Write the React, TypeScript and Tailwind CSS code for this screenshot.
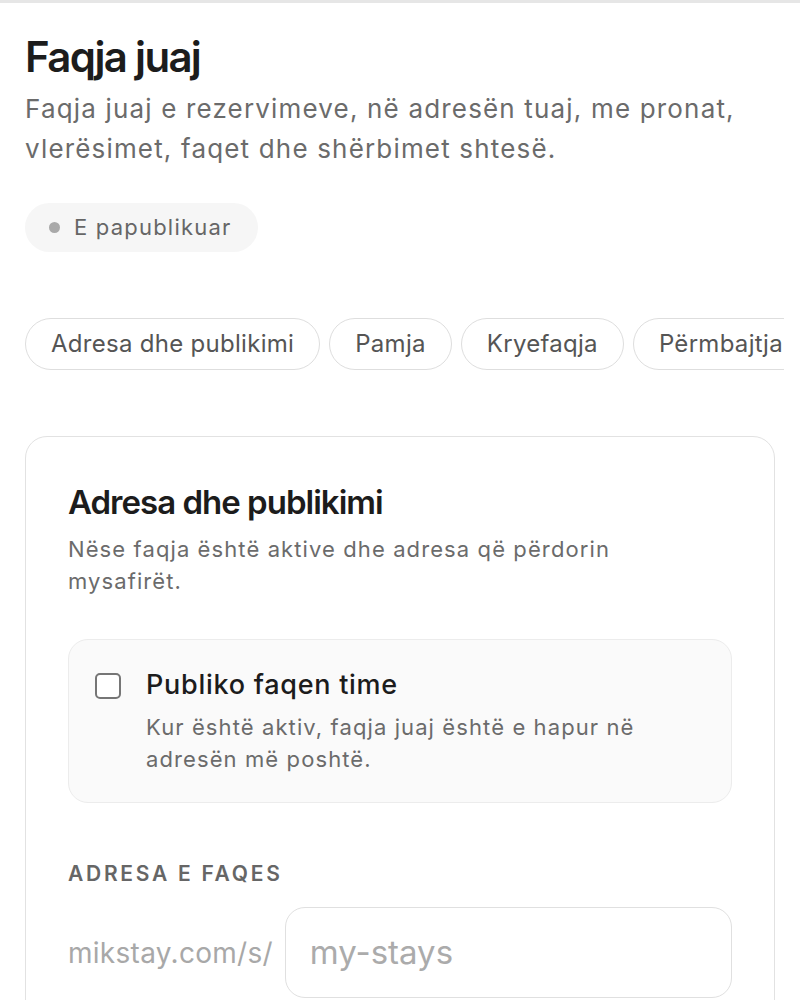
import React from "react";

const tabs = ["Adresa dhe publikimi", "Pamja", "Kryefaqja", "Përmbajtja"];

const App = () => {
  return (
    <div
      className="w-[800px] h-[1000px] overflow-hidden bg-white border-t-[3px] border-[#e6e6e6]"
      style={{ fontFamily: "Inter, 'Noto Sans', sans-serif" }}
    >
      <div className="px-[25px] pt-[29px]">
        <h1 className="text-[42px] leading-[50px] font-semibold tracking-[-0.04em] text-[#1c1c1c]">Faqja juaj</h1>
        <p className="mt-[7px] text-[26px] leading-[40px] tracking-[0.045em] text-[#6b6b6b]">
          Faqja juaj e rezervimeve, në adresën tuaj, me pronat, vlerësimet, faqet dhe shërbimet shtesë.
        </p>

        <div className="mt-[34px] inline-flex items-center h-[49px] pl-[24px] pr-[26px] rounded-full bg-[#f6f6f6]">
          <span className="w-[11px] h-[11px] rounded-full bg-[#a9a9a9]" />
          <span className="ml-[14px] text-[22px] tracking-[0.055em] text-[#666666]">E papublikuar</span>
        </div>

        <div className="mt-[66px] mr-[-9px] flex gap-[9px] overflow-hidden">
          {tabs.map((t) => (
            <button
              key={t}
              className="shrink-0 h-[52px] px-[25px] rounded-full border-[1.5px] border-[#dedede] text-[24px] tracking-[0.012em] text-[#555555] whitespace-nowrap"
            >
              {t}
            </button>
          ))}
        </div>

        <div className="mt-[66px] rounded-[22px] border-[1.5px] border-[#e2e2e2] px-[42px] pt-[47px] pb-[40px]">
          <h2 className="text-[33px] leading-[36px] font-semibold tracking-[-0.03em] text-[#1c1c1c]">
            Adresa dhe publikimi
          </h2>
          <p className="mt-[13px] text-[22px] leading-[32px] tracking-[0.05em] text-[#6b6b6b] max-w-[580px]">
            Nëse faqja është aktive dhe adresa që përdorin mysafirët.
          </p>

          <div className="mt-[42px] rounded-[20px] border border-[#ececec] bg-[#fafafa] pl-[26px] pr-[24px] pt-[29px] pb-[27px] flex gap-[25px]">
            <span className="mt-[4px] shrink-0 w-[26px] h-[26px] rounded-[5px] border-2 border-[#767676] bg-white" />
            <div>
              <div className="text-[27px] leading-[32px] font-medium tracking-[0.027em] text-[#1c1c1c]">
                Publiko faqen time
              </div>
              <p className="mt-[10px] text-[22px] leading-[32px] tracking-[0.05em] text-[#6b6b6b] max-w-[520px]">
                Kur është aktiv, faqja juaj është e hapur në adresën më poshtë.
              </p>
            </div>
          </div>

          <div className="mt-[57px] text-[21px] leading-[28px] font-semibold tracking-[0.13em] text-[#666666]">
            ADRESA E FAQES
          </div>

          <div className="mt-[19px] flex items-center gap-[12px]">
            <span className="text-[28px] tracking-[0.01em] text-[#a8a8a8] whitespace-nowrap">mikstay.com/s/</span>
            <div className="flex-1 h-[91px] rounded-[20px] border-[1.5px] border-[#e0e0e0] px-[24px] flex items-center">
              <span className="text-[33px] text-[#ababab]">my-stays</span>
            </div>
          </div>
        </div>
      </div>
    </div>
  );
};

export default App;
